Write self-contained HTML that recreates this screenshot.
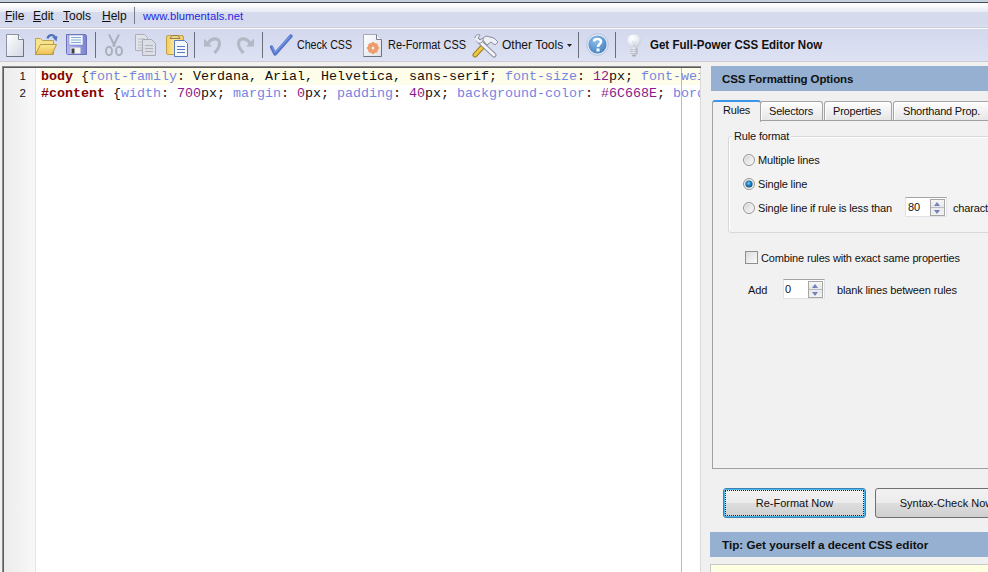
<!DOCTYPE html>
<html><head><meta charset="utf-8">
<style>
*{margin:0;padding:0;box-sizing:border-box}
html,body{width:988px;height:572px;overflow:hidden;background:#f0f0f0;font-family:"Liberation Sans",sans-serif;font-size:11px;color:#000;position:relative}
.a{position:absolute}
#title{left:0;top:0;width:988px;height:2px;background:#c6d0dc}
#tline{left:0;top:2px;width:988px;height:1px;background:#464d58}
#menu{left:0;top:3px;width:988px;height:24px;background:linear-gradient(#ffffff 0px,#fbfbfd 3px,#eff1f8 6px,#eaecf5 8.5px,#d6dbee 9px,#d4d9ec 20px,#dcdff2 24px)}
#mline{left:0;top:27px;width:988px;height:1px;background:#c9cdda}
#mline2{left:0;top:28px;width:988px;height:1px;background:#fbfbfd}
.mi{top:9px;font-size:12px;color:#101010;letter-spacing:0px}
.mi u{text-decoration:underline}
#tb{left:0;top:29px;width:988px;height:32px;background:linear-gradient(#d3d8ed,#dde1f3)}
#tbline{left:0;top:61px;width:988px;height:1px;background:#cbccd2}
#tbl2{left:0;top:62px;width:988px;height:4px;background:#f3f1f0}
.sep{width:1px;background:#6a6e7c;top:32px;height:26px}
.lbl{top:38px;font-size:12px;color:#111;white-space:nowrap}
/* editor */
#ed{left:2px;top:66px;width:699px;height:506px;background:#fff;border-top:1px solid #8a8a8a;border-left:1px solid #8a8a8a}
#edt{left:3px;top:67px;width:698px;height:1px;background:#5c5c5c}
#edl{left:3px;top:67px;width:1px;height:505px;background:#5c5c5c}
#gut{left:4px;top:68px;width:31px;height:504px;background:linear-gradient(90deg,#ececec,#f8f8f8)}
#gutl{left:35px;top:68px;width:1px;height:504px;background:#e6e6e6}
#hl{left:40px;top:68px;width:660px;height:17px;background:#fefde9}
#marg{left:681px;top:68px;width:1px;height:504px;background:#b9b9b9}
#edr{left:700px;top:68px;width:1px;height:504px;background:#dadada}
.ln{left:4px;width:22px;text-align:right;font-size:11.5px;color:#111}
.code{left:41px;font-family:"Liberation Mono",monospace;font-size:13.333px;white-space:pre;width:659px;overflow:hidden;height:17px;line-height:17px;color:#111}
.s{color:#880000;font-weight:bold}
.p{color:#7585e2}
.n{color:#8a1a8a}
.b{font-weight:bold}
/* panel */
.hdr{background:#95b0d1;font-weight:bold;font-size:11.5px;color:#101010;letter-spacing:-0.1px}
.tab{top:101px;height:19px;background:linear-gradient(#fdfdfd,#f0f0f0 60%,#e6e6e6);border:1px solid #a4a4a4;border-bottom:none;font-size:11px;letter-spacing:-0.2px;color:#111;padding-top:3px;padding-left:8px;text-align:left;border-radius:3px 3px 0 0;box-shadow:inset 1px 1px 0 #fff}
#page{left:712px;top:120px;width:290px;height:349px;border:1px solid #a0a0a0;background:#f1f1f1}
.t{font-size:11px;color:#111;white-space:nowrap;letter-spacing:-0.15px}
.radio{width:12px;height:12px;border-radius:50%;border:1px solid #989898;background:linear-gradient(135deg,#c8c8c8 0,#e6e6e6 45%,#fbfbfb 100%);box-shadow:inset 0 0 0 1px #f2f2f2}
.spin{background:#fff;border:1px solid #dfe3e8;border-top-color:#a4a4a4}
.sb{width:15px;height:17px;border:1px solid #a6a6a6;background:linear-gradient(#f6f6f6 0,#e8e8e8 45%,#b8bcc8 47%,#b8bcc8 53%,#eaeaea 55%,#f2f2f2 100%)}
.sb:before{content:"";position:absolute;left:3px;top:2px;border-left:3.5px solid transparent;border-right:3.5px solid transparent;border-bottom:4px solid #7282bc}
.sb:after{content:"";position:absolute;left:3px;top:10px;border-left:3.5px solid transparent;border-right:3.5px solid transparent;border-top:4px solid #7282bc}
.btn{top:488px;height:30px;border:1px solid #707070;border-radius:3px;background:linear-gradient(#f2f2f2 0,#ebebeb 50%,#dddddd 51%,#cfcfcf 100%);text-align:center;font-size:11px;color:#111;padding-top:8px}
</style></head><body>
<div class="a" id="title"></div>
<div class="a" id="tline"></div>
<div class="a" id="menu"></div>
<div class="a" id="mline"></div>
<div class="a" id="mline2"></div>
<div class="a mi" style="left:5px"><u>F</u>ile</div>
<div class="a mi" style="left:33px"><u>E</u>dit</div>
<div class="a mi" style="left:63px"><u>T</u>ools</div>
<div class="a mi" style="left:102px"><u>H</u>elp</div>
<div class="a" style="left:134px;top:7px;width:1px;height:17px;background:#7a7e88"></div>
<div class="a mi" style="left:143px;color:#2626e0;font-size:11.25px;top:10px">www.blumentals.net</div>

<div class="a" id="tb"></div>
<div class="a" id="tbline"></div>
<div class="a" id="tbl2"></div>
<div class="a sep" style="left:95px"></div>
<div class="a sep" style="left:194px"></div>
<div class="a sep" style="left:262px"></div>
<div class="a sep" style="left:578px"></div>
<div class="a sep" style="left:615px"></div>
<div class="a lbl" style="left:297px;transform:scaleX(0.887);transform-origin:0 0">Check CSS</div>
<div class="a lbl" style="left:388px;transform:scaleX(0.914);transform-origin:0 0">Re-Format CSS</div>
<div class="a lbl" style="left:502px">Other Tools</div>
<div class="a lbl" style="left:650px;font-weight:bold;transform:scaleX(0.96);transform-origin:0 0">Get Full-Power CSS Editor Now</div>

<!-- new -->
<svg class="a" style="left:5px;top:33px" width="20" height="25" viewBox="0 0 20 25">
<defs><linearGradient id="gpg" x1="0" y1="0" x2="1" y2="1"><stop offset="0" stop-color="#ffffff"/><stop offset="1" stop-color="#d4d8e4"/></linearGradient></defs>
<path d="M1.5 1.5H13.5L18.5 6.5V23.5H1.5Z" fill="url(#gpg)" stroke="#8d93a3" stroke-width="1"/>
<path d="M13.5 1.5V6.5H18.5" fill="#f4f5f8" stroke="#7d8393" stroke-width="1"/>
<path d="M18.5 6.5V23.5H1.5" fill="none" stroke="#6f7585" stroke-width="1"/>
</svg>
<!-- open -->
<svg class="a" style="left:34px;top:33px" width="25" height="24" viewBox="0 0 25 24">
<defs><linearGradient id="gfo" x1="0" y1="0" x2="0" y2="1"><stop offset="0" stop-color="#fbe99a"/><stop offset="1" stop-color="#eebf4c"/></linearGradient></defs>
<path d="M1.5 5.5H6.5L8.5 7.5H19.5V21.5H1.5Z" fill="#f8e488" stroke="#b8a060" stroke-width="1"/>
<path d="M6.5 11.5H22.5L18 21.5H1.5Z" fill="url(#gfo)" stroke="#b89a48" stroke-width="1"/>
<path d="M13.5 5.5C14.5 1.5 19.5 1 21 4" fill="none" stroke="#4e72b8" stroke-width="2.2"/>
<path d="M18.5 4.2L23.5 3L22.5 8.5Z" fill="#4e72b8"/>
</svg>
<!-- save -->
<svg class="a" style="left:65px;top:33px" width="23" height="23" viewBox="0 0 23 23">
<defs><linearGradient id="gsv" x1="0" y1="0" x2="1" y2="0"><stop offset="0" stop-color="#b4b8ec"/><stop offset="1" stop-color="#7c84d0"/></linearGradient></defs>
<path d="M1.5 1.5H20.5L21.5 2.5V21.5H2.5L1.5 20.5Z" fill="url(#gsv)" stroke="#6a72b8" stroke-width="1"/>
<rect x="4" y="2" width="14" height="10" fill="#f6f8fc" stroke="#7c84c8" stroke-width="0.6"/>
<path d="M6 4.5H16M6 7H16M6 9.5H16" stroke="#80a8d8" stroke-width="1"/>
<rect x="5.5" y="14.5" width="10" height="6" fill="#f4f4ec"/>
<rect x="6.5" y="15.5" width="3" height="5" fill="#404048"/>
</svg>
<!-- cut -->
<svg class="a" style="left:104px;top:33px" width="20" height="24" viewBox="0 0 20 24">
<g fill="none" stroke="#abaebb" stroke-width="2">
<path d="M5 1.5L11 13.5M15 1.5L9 13.5"/>
<ellipse cx="5" cy="18" rx="3" ry="4.2"/>
<ellipse cx="15" cy="18" rx="3" ry="4.2"/>
</g></svg>
<!-- copy -->
<svg class="a" style="left:134px;top:33px" width="23" height="24" viewBox="0 0 23 24">
<path d="M1.5 1.5H10.5L13.5 4.5V17.5H1.5Z" fill="#e2e4ea" stroke="#adb0ba" stroke-width="1"/>
<path d="M4 6H11M4 9H11M4 12H11M4 15H8" stroke="#b8bac4" stroke-width="1"/>
<path d="M8.5 6.5H17.5L21.5 10.5V22.5H8.5Z" fill="#dcdee6" stroke="#a8abb6" stroke-width="1"/>
<path d="M11 12.5H19M11 15.5H19M11 18.5H19" stroke="#b0b3be" stroke-width="1"/>
</svg>
<!-- paste -->
<svg class="a" style="left:165px;top:33px" width="24" height="25" viewBox="0 0 24 25">
<defs><linearGradient id="gcl" x1="0" y1="0" x2="1" y2="0"><stop offset="0" stop-color="#f0cc5c"/><stop offset="0.5" stop-color="#fbe9a0"/><stop offset="1" stop-color="#eec660"/></linearGradient></defs>
<rect x="1.5" y="2.5" width="17" height="19" rx="1.5" fill="url(#gcl)" stroke="#c0a048" stroke-width="1"/>
<path d="M5 5.5L7 2.5H13L15 5.5Z" fill="#e8d090" stroke="#9a8040" stroke-width="1"/>
<path d="M9.5 7.5H19.5L22.5 10.5V23.5H9.5Z" fill="#f4f7fc" stroke="#5878c0" stroke-width="1"/>
<path d="M12 13.5H20M12 16.5H20M12 19.5H20" stroke="#5a78c8" stroke-width="1"/>
</svg>
<!-- undo -->
<svg class="a" style="left:203px;top:36px" width="20" height="20" viewBox="0 0 20 20">
<path d="M5 7.5C8 1.5 17 1 16.5 8C16.2 12 14 14.5 11.5 17" fill="none" stroke="#b4b8c4" stroke-width="3.2"/>
<path d="M1 2.5V10.5H9Z" fill="#b4b8c4"/>
</svg>
<!-- redo -->
<svg class="a" style="left:235px;top:36px" width="20" height="20" viewBox="0 0 20 20">
<g transform="translate(20 0) scale(-1 1)">
<path d="M5 7.5C8 1.5 17 1 16.5 8C16.2 12 14 14.5 11.5 17" fill="none" stroke="#b4b8c4" stroke-width="3.2"/>
<path d="M1 2.5V10.5H9Z" fill="#b4b8c4"/>
</g>
</svg>
<!-- check -->
<svg class="a" style="left:264px;top:30px" width="32" height="30" viewBox="0 0 32 30">
<path d="M7.5 17L11 24L27 6" fill="none" stroke="#5474c8" stroke-width="3.4" stroke-linecap="round" stroke-linejoin="round"/>
<path d="M8.5 17.5L11 22.5L26 6.5" fill="none" stroke="#7896e4" stroke-width="1.2" stroke-linecap="round" stroke-linejoin="round"/>
</svg>
<!-- reformat -->
<svg class="a" style="left:362px;top:33px" width="21" height="25" viewBox="0 0 21 25">
<defs><linearGradient id="grf" x1="0" y1="0" x2="1" y2="1"><stop offset="0" stop-color="#ffffff"/><stop offset="1" stop-color="#dde0e8"/></linearGradient></defs>
<path d="M1.5 1.5H14.5L19.5 6.5V23.5H1.5Z" fill="url(#grf)" stroke="#a4a9b6" stroke-width="1"/>
<path d="M19.5 6.5V23.5H1.5" fill="none" stroke="#6c7280" stroke-width="1"/>
<path d="M14.5 1.5V6.5H19.5" fill="#f2f3f6" stroke="#7a808e" stroke-width="1"/>
<g transform="translate(11 15)" opacity="0.9">
<circle r="4" fill="none" stroke="#f0925a" stroke-width="2.8"/>
<path d="M0 -6V6M-6 0H6M-4.2 -4.2L4.2 4.2M-4.2 4.2L4.2 -4.2" stroke="#f0925a" stroke-width="1.8"/>
<circle r="1.5" fill="#e6eef6"/>
</g>
</svg>
<!-- tools -->
<svg class="a" style="left:472px;top:33px" width="28" height="25" viewBox="0 0 28 25">
<path d="M3 22L15 9" stroke="#9a7c20" stroke-width="5" stroke-linecap="round"/>
<path d="M3 22L15 9" stroke="#f0c840" stroke-width="3" stroke-linecap="round"/>
<path d="M10 6L14 3L22 5L26 9L23 12L19 9L15 12Z" fill="#eef0f6" stroke="#8a8ea0" stroke-width="1"/>
<path d="M7 8L22 22" stroke="#8a8ea0" stroke-width="5" stroke-linecap="round"/>
<path d="M7 8L22 22" stroke="#f4f5fa" stroke-width="3" stroke-linecap="round"/>
<path d="M3 5C3 2 6 1 8 2L6 5L8 7L11 5C12 8 9 11 6 10" fill="#eef0f6" stroke="#8a8ea0" stroke-width="1"/>
</svg>
<!-- help -->
<svg class="a" style="left:585px;top:32px" width="25" height="25" viewBox="0 0 25 25">
<defs><radialGradient id="ghp" cx="0.4" cy="0.3" r="0.8"><stop offset="0" stop-color="#8cbcec"/><stop offset="1" stop-color="#3f7cc0"/></radialGradient></defs>
<circle cx="12.5" cy="12.5" r="10.8" fill="#e6ecf6" stroke="#a8b8d0" stroke-width="0.8"/>
<circle cx="12.5" cy="12.5" r="9.1" fill="url(#ghp)"/>
<path d="M9 9.5C9 6.5 16 6 16 9.5C16 12 13 12 13 15" fill="none" stroke="#fff" stroke-width="2.6"/>
<rect x="11.5" y="16.5" width="3" height="3" fill="#fff"/>
</svg>
<!-- bulb -->
<svg class="a" style="left:624px;top:32px" width="20" height="26" viewBox="0 0 20 26">
<defs><radialGradient id="gbl" cx="0.35" cy="0.3" r="0.75"><stop offset="0" stop-color="#ffffff"/><stop offset="0.6" stop-color="#e8edf4"/><stop offset="1" stop-color="#c4ccd8"/></radialGradient>
<linearGradient id="gbb" x1="0" y1="0" x2="1" y2="0"><stop offset="0" stop-color="#d4d8e0"/><stop offset="0.5" stop-color="#f0f2f6"/><stop offset="1" stop-color="#a8acb8"/></linearGradient></defs>
<path d="M10 2C5.5 2 3 5 3 8.5C3 11.5 5.5 13 6.5 15.5H13.5C14.5 13 17 11.5 17 8.5C17 5 14.5 2 10 2Z" fill="url(#gbl)" stroke="#d0d6e0" stroke-width="0.7"/>
<path d="M8.5 9L10 14.5L11.5 9" fill="none" stroke="#c8ced8" stroke-width="0.7"/>
<rect x="6.5" y="15.5" width="7" height="7" rx="1" fill="url(#gbb)"/>
<path d="M6.5 17.5H13.5M6.5 19.5H13.5M6.5 21.5H13.5" stroke="#b4b8c4" stroke-width="0.8"/>
<rect x="8" y="22.5" width="4" height="2" rx="1" fill="#a8acb8"/>
</svg>
<!-- dropdown arrow -->
<svg class="a" style="left:567px;top:44px" width="5" height="3" viewBox="0 0 5 3"><path d="M0 0H5L2.5 3Z" fill="#202020"/></svg>

<!-- editor -->
<div class="a" id="ed"></div>
<div class="a" id="edt"></div>
<div class="a" id="edl"></div>
<div class="a" id="gut"></div>
<div class="a" id="gutl"></div>
<div class="a" id="hl"></div>
<div class="a" id="marg"></div>
<div class="a" id="edr"></div>
<div class="a ln" style="top:70px">1</div>
<div class="a ln" style="top:87px">2</div>
<div class="a code" style="top:68px"><span class="s">body</span> {<span class="p">font-family</span>: Verdana, Arial, Helvetica, sans-serif; <span class="p">font-size</span>: <span class="n">12</span>px; <span class="p">font-weight</span>: normal;</div>
<div class="a code" style="top:85px"><span class="s">#content</span> {<span class="p">width</span>: <span class="n">700</span>px; <span class="p">margin</span>: <span class="n">0</span>px; <span class="p">padding</span>: <span class="n">40</span>px; <span class="p">background-color</span>: <span class="n">#6C668E</span>; <span class="p">border</span>: 1px;</div>

<!-- panel -->
<div class="a hdr" style="left:711px;top:66px;width:277px;height:25px;padding:8px 0 0 11px;line-height:11px">CSS Formatting Options</div>
<div class="a" id="page"></div>
<div class="a tab" style="left:760px;width:63px">Selectors</div>
<div class="a tab" style="left:824px;width:68px;padding-left:8px">Properties</div>
<div class="a tab" style="left:893px;width:100px;padding-left:9px">Shorthand Prop.</div>
<div class="a tab" style="left:712px;top:100px;width:49px;height:22px;background:#f1f1f1;border-top:2px solid #3d95e8;padding-top:2px;padding-left:10px;box-shadow:none">Rules</div>

<div class="a" style="left:728px;top:136px;width:270px;height:97px;border:1px solid #d8d8d8;border-radius:3px;box-shadow:inset 1px 1px 0 #fff;background:#f3f3f3"></div>
<div class="a t" style="left:732px;top:130px;background:#f1f1f1;padding:0 2px">Rule format</div>
<div class="a radio" style="left:743px;top:154px"></div>
<div class="a t" style="left:758px;top:154px">Multiple lines</div>
<div class="a radio" style="left:743px;top:178px"></div>
<svg class="a" style="left:743px;top:178px" width="12" height="12" viewBox="0 0 12 12"><defs><radialGradient id="grd" cx="0.45" cy="0.4" r="0.6"><stop offset="0" stop-color="#8ad0f4"/><stop offset="0.45" stop-color="#2088c8"/><stop offset="1" stop-color="#1a4a74"/></radialGradient></defs><circle cx="6" cy="6" r="3.6" fill="url(#grd)"/></svg>
<div class="a t" style="left:758px;top:178px">Single line</div>
<div class="a radio" style="left:743px;top:202px"></div>
<div class="a t" style="left:758px;top:202px">Single line if rule is less than</div>
<div class="a spin" style="left:905px;top:197px;width:42px;height:20px"></div>
<div class="a sb" style="left:930px;top:199px"></div>
<div class="a t" style="left:908px;top:201px">80</div>
<div class="a t" style="left:953px;top:202px">characters</div>

<div class="a" style="left:745px;top:251px;width:13px;height:13px;border:1px solid #8e8f8f;background:linear-gradient(135deg,#dcdcdc,#fafafa)"></div>
<div class="a t" style="left:761px;top:252px">Combine rules with exact same properties</div>
<div class="a t" style="left:748px;top:284px">Add</div>
<div class="a spin" style="left:783px;top:279px;width:42px;height:20px"></div>
<div class="a sb" style="left:808px;top:281px"></div>
<div class="a t" style="left:785px;top:283px">0</div>
<div class="a t" style="left:837px;top:284px">blank lines between rules</div>

<div class="a btn" style="left:723px;width:143px;border-color:#3c7fb1;box-shadow:inset 0 0 0 1px #48b8f0">Re-Format Now</div>
<div class="a" style="left:725px;top:490px;width:139px;height:26px;border:1px dotted #202020"></div>
<div class="a btn" style="left:875px;width:143px">Syntax-Check Now</div>
<div class="a hdr" style="left:710px;top:532px;width:278px;height:25px;padding:7px 0 0 12px;line-height:11px;font-size:11.7px;letter-spacing:0">Tip: Get yourself a decent CSS editor</div>
<div class="a" style="left:710px;top:564px;width:290px;height:20px;border:1px solid #c8c8c8;background:#ffffe1"></div>
</body></html>
